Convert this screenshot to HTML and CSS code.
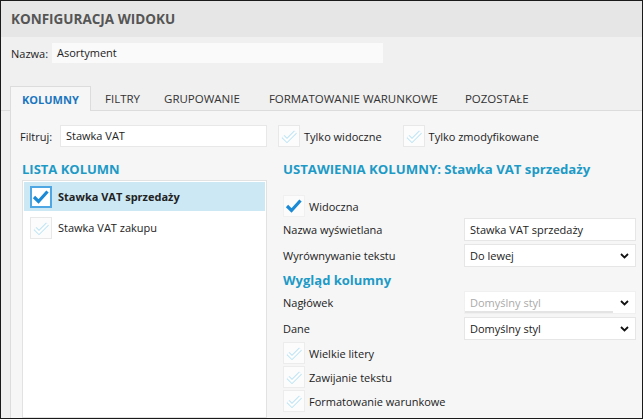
FILE: index.html
```html
<!DOCTYPE html>
<html lang="pl">
<head>
<meta charset="utf-8">
<link rel="stylesheet" href="styles.css">
</head>
<body>
<div class="window">
  <header class="titlebar">KONFIGURACJA WIDOKU</header>
  <div class="name-row">
    <span class="lbl">Nazwa:</span>
    <div class="field name-field">Asortyment</div>
  </div>
  <nav class="tabs">
    <div class="tab active">KOLUMNY</div>
    <div class="tab t-filtry">FILTRY</div>
    <div class="tab t-grup">GRUPOWANIE</div>
    <div class="tab t-form">FORMATOWANIE WARUNKOWE</div>
    <div class="tab t-poz">POZOSTAŁE</div>
  </nav>
  <section class="panel">
    <div class="filter-row">
      <span class="lbl">Filtruj:</span>
      <div class="field filter-field">Stawka VAT</div>
      <span class="cb off"><svg viewBox="0 0 22 22"><path class="o1" d="M5 11.5 L9 15.5 L17.5 7"/><path class="o2" d="M5 11.5 L9 15.5 L17.5 7"/></svg></span>
      <span class="cb-lbl">Tylko widoczne</span>
      <span class="cb off cb-second"><svg viewBox="0 0 22 22"><path class="o1" d="M5 11.5 L9 15.5 L17.5 7"/><path class="o2" d="M5 11.5 L9 15.5 L17.5 7"/></svg></span>
      <span class="cb-lbl">Tylko zmodyfikowane</span>
    </div>
    <div class="columns">
      <div class="left">
        <h2 class="heading">LISTA KOLUMN</h2>
        <div class="list">
          <div class="item selected">
            <span class="cb on sel"><svg viewBox="0 0 22 22"><path class="chk" d="M4 11 L8.5 15.5 L17.5 5.5"/></svg></span>
            <span class="item-txt bold">Stawka VAT sprzedaży</span>
          </div>
          <div class="item">
            <span class="cb off"><svg viewBox="0 0 22 22"><path class="o1" d="M5 11.5 L9 15.5 L17.5 7"/><path class="o2" d="M5 11.5 L9 15.5 L17.5 7"/></svg></span>
            <span class="item-txt">Stawka VAT zakupu</span>
          </div>
        </div>
      </div>
      <div class="right">
        <h2 class="heading">USTAWIENIA KOLUMNY: Stawka VAT sprzedaży</h2>
        <div class="check-row visible-row">
          <span class="cb on plain"><svg viewBox="0 0 22 22"><path class="chk" d="M4 11 L8.5 15.5 L17.5 5.5"/></svg></span>
          <span class="cb-lbl">Widoczna</span>
        </div>
        <div class="form">
          <span class="flbl">Nazwa wyświetlana</span>
          <div class="field ffield">Stawka VAT sprzedaży</div>
          <span class="flbl">Wyrównywanie tekstu</span>
          <div class="field ffield select">Do lewej<svg class="chev" viewBox="0 0 9 6"><path d="M1 1 L4.5 4.5 L8 1"/></svg></div>
        </div>
        <h3 class="subheading">Wygląd kolumny</h3>
        <div class="form form2">
          <span class="flbl">Nagłówek</span>
          <div class="field ffield select disabled"><span class="dis-txt">Domyślny styl</span><svg class="chev" viewBox="0 0 9 6"><path d="M1 1 L4.5 4.5 L8 1"/></svg></div>
          <span class="flbl">Dane</span>
          <div class="field ffield select">Domyślny styl<svg class="chev" viewBox="0 0 9 6"><path d="M1 1 L4.5 4.5 L8 1"/></svg></div>
        </div>
        <div class="check-list">
          <div class="check-row">
            <span class="cb off"><svg viewBox="0 0 22 22"><path class="o1" d="M5 11.5 L9 15.5 L17.5 7"/><path class="o2" d="M5 11.5 L9 15.5 L17.5 7"/></svg></span>
            <span class="cb-lbl">Wielkie litery</span>
          </div>
          <div class="check-row">
            <span class="cb off"><svg viewBox="0 0 22 22"><path class="o1" d="M5 11.5 L9 15.5 L17.5 7"/><path class="o2" d="M5 11.5 L9 15.5 L17.5 7"/></svg></span>
            <span class="cb-lbl">Zawijanie tekstu</span>
          </div>
          <div class="check-row">
            <span class="cb off"><svg viewBox="0 0 22 22"><path class="o1" d="M5 11.5 L9 15.5 L17.5 7"/><path class="o2" d="M5 11.5 L9 15.5 L17.5 7"/></svg></span>
            <span class="cb-lbl">Formatowanie warunkowe</span>
          </div>
        </div>
      </div>
    </div>
  </section>
</div>
</body>
</html>
```
FILE: styles.css
```css
* { box-sizing: border-box; }
html, body { margin: 0; padding: 0; }
body {
  font-family: "Open Sans", "Noto Sans", sans-serif;
  font-size: 11px;
  color: #222;
  background: #fff;
}
.window {
  width: 643px;
  height: 419px;
  border: 1px solid #1a1a1a;
  background: #f0f0f0;
  overflow: hidden;
  display: flex;
  flex-direction: column;
}
.titlebar {
  height: 36px;
  flex: none;
  background: #e6e6e6;
  color: #555;
  font-weight: 700;
  font-size: 13.5px;
  line-height: 37px;
  padding-left: 10px;
}
.name-row {
  display: flex;
  align-items: center;
  margin-top: 6px;
  padding-left: 10px;
  flex: none;
}
.name-row .lbl { width: 41px; }
.field {
  background: #fff;
  height: 22px;
  line-height: 20px;
  padding-left: 5px;
  border: 1px solid #e6e6e6;
  position: relative;
}
.name-field {
  width: 331px;
  height: 20px;
  line-height: 20px;
  border: none;
  background: #fafafa;
}
.tabs {
  display: flex;
  margin-top: 23px;
  padding-left: 9px;
  height: 25px;
  flex: none;
  border-bottom: 1px solid #dcdcdc;
}
.tab {
  height: 25px;
  line-height: 25px;
  padding: 0 12px;
  color: #333;
  font-size: 11.5px;
}
.tab.active {
  background: #f6f6f6;
  border: 1px solid #dcdcdc;
  border-bottom: none;
  height: 26px;
  color: #1b76c0;
  font-weight: 700;
  font-size: 11px;
  width: 81px;
  padding: 0 0 0 11px;
}
.t-filtry { margin-left: 2px; }
.t-grup { margin-left: 0; }
.t-form { margin-left: 5px; }
.t-poz { margin-left: 3px; }
.panel {
  flex: 1;
  margin-left: 9px;
  background: #f6f6f6;
  border-left: 1px solid #dcdcdc;
  display: flex;
  flex-direction: column;
  min-height: 0;
}
.filter-row {
  display: flex;
  align-items: center;
  margin-top: 14px;
  padding-left: 9px;
  height: 22px;
}
.filter-row .lbl { width: 40px; }
.filter-field {
  width: 207px;
  border-color: #e8e8e8;
}
.cb {
  width: 22px;
  height: 22px;
  flex: none;
  border: 1px solid #e8e8e8;
  background: #fcfcfc;
  display: inline-flex;
  align-items: center;
  justify-content: center;
}
.cb svg { width: 22px; height: 22px; flex: none; }
.cb .o1 { fill: none; stroke: #bfe4f4; stroke-width: 4; stroke-linejoin: miter; stroke-linecap: butt; }
.cb .o2 { fill: none; stroke: #fff; stroke-width: 2; stroke-linejoin: miter; stroke-linecap: butt; }
.cb .chk { fill: none; stroke: #1a8ad6; stroke-width: 3.2; stroke-linejoin: miter; }
.filter-row .cb { margin-left: 11px; }
.filter-row .cb-second { margin-left: 21px; }
.cb-lbl { margin-left: 4px; }
.columns {
  display: flex;
  margin-top: 13px;
  padding-left: 11px;
  flex: 1;
  min-height: 0;
}
.left {
  width: 245px;
  flex: none;
  display: flex;
  flex-direction: column;
}
.heading {
  margin: 0;
  font-size: 13px;
  font-weight: 700;
  color: #1d9ac6;
  line-height: 18px;
  height: 18px;
  white-space: nowrap;
}
.right .heading { font-size: 13.2px; }
.list {
  margin-top: 2px;
  flex: 1;
  background: #fff;
  border: 1px solid #e2e2e2;
  padding: 1px 1px;
}
.item {
  display: flex;
  align-items: center;
  height: 29px;
  padding-left: 6px;
}
.item + .item { margin-top: 2px; }
.item.selected { background: #cce8f5; }
.cb.sel { border: 2px solid #4ea6e2; background: #fff; }
.item-txt { margin-left: 6px; }
.bold { font-weight: 700; }
.right {
  margin-left: 16px;
  flex: 1;
  display: flex;
  flex-direction: column;
}
.cb.plain { border-color: #f0f0f0; background: #fbfbfb; }
.check-row {
  display: flex;
  align-items: center;
  height: 22px;
}
.visible-row { margin-top: 17px; }
.form {
  display: grid;
  grid-template-columns: 181px 172px;
  row-gap: 3px;
  align-items: center;
  margin-top: 1px;
}
.ffield { height: 23px; line-height: 21px; }
.select .chev {
  position: absolute;
  right: 6px;
  top: 8px;
  width: 9px;
  height: 6px;
}
.chev path { fill: none; stroke: #111; stroke-width: 1.8; }
.subheading {
  margin: 3px 0 0;
  font-size: 13px;
  font-weight: 700;
  color: #1d9ac6;
  height: 20px;
  line-height: 20px;
}
.form2 { margin-top: 1px; }
.disabled { border-color: #f0f0f0; }
.dis-txt {
  display: block;
  color: #aaa;
  width: 148px;
  border-bottom: 2px solid #e4e4e4;
  margin-left: -5px;
  padding-left: 5px;
  height: 21px;
}
.check-list {
  margin-top: 2px;
  display: flex;
  flex-direction: column;
  gap: 2px;
}
.check-list .cb { border-color: #ececec; }
```
